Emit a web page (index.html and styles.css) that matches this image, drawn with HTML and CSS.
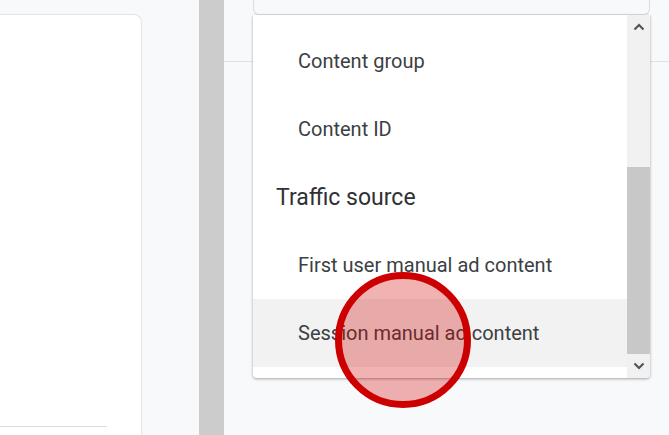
FILE: index.html
```html
<!DOCTYPE html>
<html lang="en">
<head>
<meta charset="utf-8">
<title>Dimension picker</title>
<link rel="stylesheet" href="styles.css">
</head>
<body>
<div class="page">
  <div class="left-area">
    <div class="card">
      <div class="card-divider"></div>
    </div>
  </div>
  <div class="splitter"></div>
  <div class="right-area">
    <div class="head">
      <div class="field"></div>
    </div>
    <div class="dropdown">
      <div class="list">
        <div class="item">Content group</div>
        <div class="item">Content ID</div>
        <div class="group">Traffic source</div>
        <div class="item">First user manual ad content</div>
        <div class="item hover">Session manual ad content</div>
      </div>
      <div class="scrollbar">
        <div class="sb-btn">
          <svg width="12" height="8" viewBox="0 0 12 8"><path d="M1.5 6.5 L6 2 L10.5 6.5" fill="none" stroke="#555" stroke-width="2.2"/></svg>
        </div>
        <div class="sb-track"><div class="sb-thumb"></div></div>
        <div class="sb-btn">
          <svg width="12" height="8" viewBox="0 0 12 8"><path d="M1.5 1.5 L6 6 L10.5 1.5" fill="none" stroke="#555" stroke-width="2.2"/></svg>
        </div>
      </div>
    </div>
    <div class="click-marker"></div>
  </div>
</div>
</body>
</html>
```

FILE: styles.css
```css
html, body {
  margin: 0;
  padding: 0;
}
body {
  width: 669px;
  height: 435px;
  overflow: hidden;
  background: #f8f9fa;
  font-family: Roboto, "Noto Sans", "Liberation Sans", sans-serif;
  color: #3c4043;
}
.page {
  display: flex;
  height: 435px;
}
.left-area {
  width: 199px;
  padding-top: 14px;
  box-sizing: border-box;
}
.card {
  width: 142px;
  height: 100%;
  box-sizing: border-box;
  background: #fff;
  border-top: 1px solid #e3e5e8;
  border-right: 1px solid #e3e5e8;
  border-top-right-radius: 8px;
  padding-top: 411px;
}
.card-divider {
  width: 107px;
  height: 1px;
  background: #dadce0;
}
.splitter {
  width: 25px;
  background: #cccccc;
}
.right-area {
  flex: 1;
  position: relative;
}
.head {
  height: 61px;
  border-bottom: 1px solid #e0e2e5;
  padding: 0 19px 0 29px;
}
.field {
  height: 14px;
  border: 1px solid #dadce0;
  border-top: none;
  border-radius: 0 0 6px 6px;
  background: #f8f9fa;
}
.dropdown {
  position: absolute;
  top: 15px;
  left: 29px;
  width: 397px;
  height: 363px;
  display: flex;
  background: #fff;
  border-radius: 0 0 4px 4px;
  box-shadow: 0 1px 3px rgba(0,0,0,0.35);
  overflow: hidden;
}
.list {
  flex: 1;
  padding-top: 12px;
}
.item, .group {
  height: 68px;
  display: flex;
  align-items: center;
}
.item {
  padding-left: 45px;
  font-size: 20px;
}
.group {
  padding-left: 23px;
  font-size: 23px;
  color: #303134;
}
.item.hover {
  background: #f2f2f2;
}
.scrollbar {
  width: 23px;
  display: flex;
  flex-direction: column;
  background: #f1f1f1;
}
.sb-btn {
  height: 24px;
  display: flex;
  align-items: center;
  justify-content: center;
}
.sb-track {
  flex: 1;
  padding-top: 128px;
}
.sb-thumb {
  height: 187px;
  background: #c8c8c8;
}
.click-marker {
  position: absolute;
  left: 111px;
  top: 272px;
  width: 136px;
  height: 136px;
  box-sizing: border-box;
  border-radius: 50%;
  border: 7px solid #cc0000;
  background: rgba(210, 0, 0, 0.3);
}
```
